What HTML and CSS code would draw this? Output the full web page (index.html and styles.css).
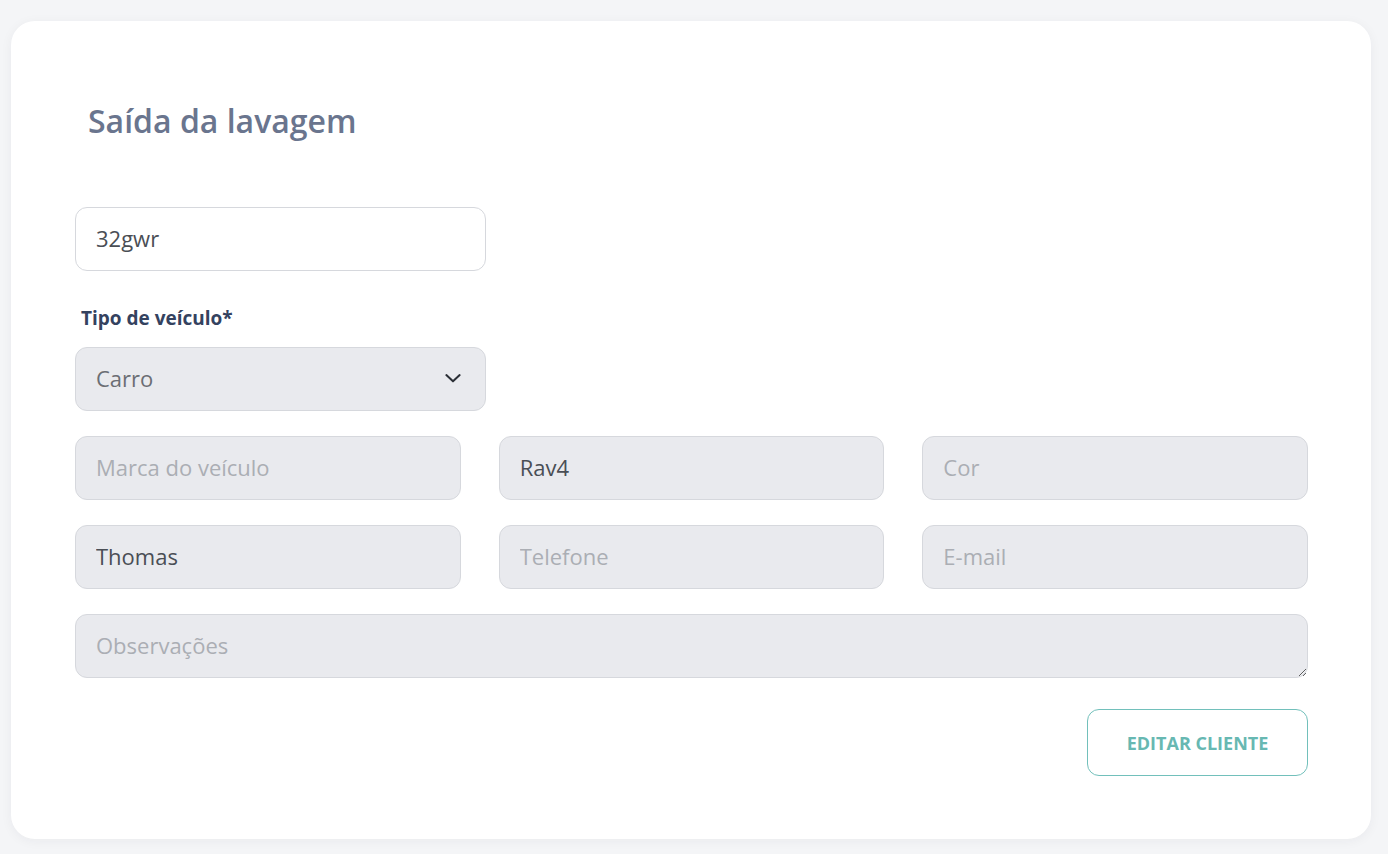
FILE: index.html
```html
<!DOCTYPE html>
<html lang="pt-BR">
<head>
    <meta charset="UTF-8">
    <meta name="viewport" content="width=device-width, initial-scale=1.0">
    <title>Saída da lavagem</title>
    <link rel="stylesheet" href="styles.css">
</head>
<body>
    <div class="card">
        <h1 class="title">Saída da lavagem</h1>

        <form class="form">
            <div class="field half">
                <input class="input white" type="text" value="32gwr">
            </div>

            <div class="field half">
                <label class="label">Tipo de veículo*</label>
                <div class="select-wrap">
                    <select class="input select">
                        <option>Carro</option>
                    </select>
                    <svg class="chevron" width="20" height="20" viewBox="0 0 24 24" fill="none" stroke="#2b2f36" stroke-width="2.4" stroke-linecap="round" stroke-linejoin="round">
                        <path d="M4 8.5l8 7.5 8-7.5"/>
                    </svg>
                </div>
            </div>

            <div class="row">
                <input class="input" type="text" placeholder="Marca do veículo">
                <input class="input" type="text" value="Rav4">
                <input class="input" type="text" placeholder="Cor">
            </div>

            <div class="row">
                <input class="input" type="text" value="Thomas">
                <input class="input" type="text" placeholder="Telefone">
                <input class="input" type="text" placeholder="E-mail">
            </div>

            <textarea class="input textarea" placeholder="Observações"></textarea>

            <div class="actions">
                <button type="button" class="button">Editar cliente</button>
            </div>
        </form>
    </div>
</body>
</html>
```

FILE: styles.css
```css
* {
    box-sizing: border-box;
}
body {
    margin: 0;
    padding: 21px 17px 15px 11px;
    background: #f4f5f7;
    font-family: 'Open Sans', 'Noto Sans', sans-serif;
}
.card {
    background: #fff;
    border-radius: 24px;
    box-shadow: 0 2px 12px rgba(30, 40, 60, 0.05);
    padding: 80px 63px 63px 64px;
    height: 818px;
}
.title {
    margin: 0 0 66px 13px;
    font-size: 32px;
    font-weight: 600;
    color: #6a758e;
    line-height: 40px;
}
.form {
    display: flex;
    flex-direction: column;
}
.field {
    margin-bottom: 25px;
}
.half {
    width: 411px;
}
.label {
    display: block;
    margin: 9px 0 16px 6px;
    font-size: 19px;
    font-weight: 700;
    color: #34425f;
    line-height: 26px;
}
.input {
    display: block;
    width: 100%;
    height: 64px;
    padding: 0 20px 3px;
    border: 1px solid #d6d8dd;
    border-radius: 12px;
    background: #e9eaee;
    font-family: inherit;
    font-size: 22px;
    color: #4a4e55;
    outline: none;
}
.input::placeholder {
    color: #abaeb4;
}
.input.white {
    background: #fff;
}
.select-wrap {
    position: relative;
}
.select {
    appearance: none;
    -webkit-appearance: none;
    color: #6b6e74;
}
.chevron {
    position: absolute;
    right: 23px;
    top: 21px;
    pointer-events: none;
}
.row {
    display: grid;
    grid-template-columns: 1fr 1fr 1fr;
    column-gap: 38px;
    margin-bottom: 25px;
}
.textarea {
    padding-top: 15px;
    resize: vertical;
    margin-bottom: 31px;
}
.actions {
    display: flex;
    justify-content: flex-end;
}
.button {
    width: 221px;
    height: 67px;
    border: 1px solid #72c0bb;
    border-radius: 12px;
    background: #fff;
    color: #67b8b2;
    font-family: inherit;
    font-size: 18px;
    font-weight: 700;
    text-transform: uppercase;
    cursor: pointer;
}
```
